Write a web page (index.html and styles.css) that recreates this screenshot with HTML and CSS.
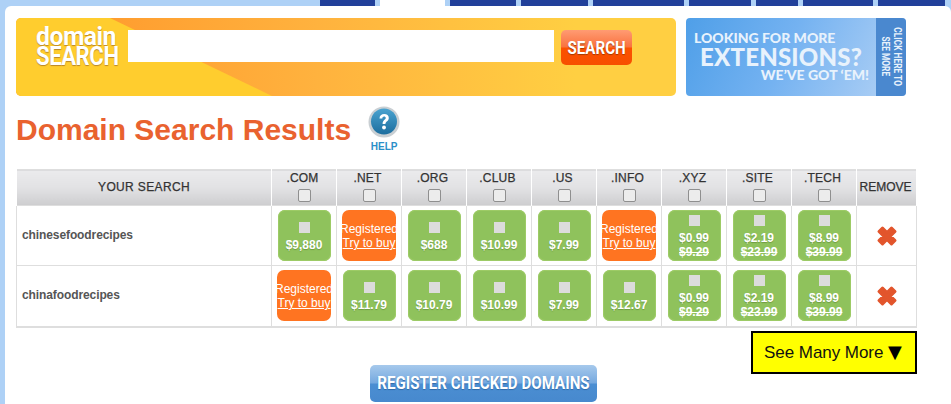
FILE: index.html
```html
<!DOCTYPE html>
<html lang="en">
<head>
<meta charset="utf-8">
<title>Domain Search Results</title>
<link rel="stylesheet" href="styles.css">
</head>
<body>
<nav class="nav">
  <span class="tab t1"></span><span class="tab t2 active"></span><span class="tab t3"></span><span class="tab t4"></span><span class="tab t5"></span><span class="tab t6"></span><span class="tab t7"></span><span class="tab t8"></span><span class="tab t9"></span>
</nav>
<main class="panel">
  <div class="top-row">
    <div class="banner">
      <div class="logo"><span class="logo-a">domain</span><span class="logo-b">SEARCH</span></div>
      <div class="search-input"></div>
      <div class="search-btn"><span class="cond">SEARCH</span></div>
    </div>
    <div class="promo">
      <div class="promo-copy">
        <div class="promo-l1">LOOKING FOR MORE</div>
        <div class="promo-l2">EXTENSIONS?</div>
        <div class="promo-l3">WE’VE GOT ‘EM!</div>
      </div>
      <div class="promo-tab"><span class="promo-tab-text">CLICK HERE TO<br>SEE MORE</span></div>
    </div>
  </div>
  <div class="title-row">
    <h1 class="title">Domain Search Results</h1>
    <div class="help">
      <svg class="help-icon" width="32" height="32" viewBox="0 0 32 32">
        <defs>
          <linearGradient id="hg" x1="0" y1="0" x2="0" y2="1"><stop offset="0" stop-color="#4aa3d0"/><stop offset="1" stop-color="#1c6d9e"/></linearGradient>
        </defs>
        <circle cx="16" cy="16" r="15.5" fill="#c9cfd3"/>
        <circle cx="16" cy="15.5" r="13" fill="url(#hg)"/>
        <path d="M11.5 12.5c0-3 2-4.6 4.7-4.6 2.8 0 4.6 1.6 4.6 4 0 3.2-3.400 3.400-3.400 6.200h-2.800c0-4.200 3.200-4.200 3.200-6 0-1-.7-1.600-1.700-1.600-1.100 0-1.800.7-1.800 2z" fill="#fff"/>
        <circle cx="16" cy="21.500" r="1.900" fill="#fff"/>
      </svg>
      <span class="help-label">HELP</span>
    </div>
  </div>
  <table class="results">
    <colgroup><col class="c-name"><col class="c-ext"><col class="c-ext"><col class="c-ext"><col class="c-ext"><col class="c-ext"><col class="c-ext"><col class="c-ext"><col class="c-ext"><col class="c-ext"><col class="c-rm"></colgroup>
    <thead>
      <tr>
        <th class="th-name">YOUR SEARCH</th>
        <th class="th-ext">.COM<input type="checkbox" class="hcheck"></th>
        <th class="th-ext">.NET<input type="checkbox" class="hcheck"></th>
        <th class="th-ext">.ORG<input type="checkbox" class="hcheck"></th>
        <th class="th-ext">.CLUB<input type="checkbox" class="hcheck"></th>
        <th class="th-ext">.US<input type="checkbox" class="hcheck"></th>
        <th class="th-ext">.INFO<input type="checkbox" class="hcheck"></th>
        <th class="th-ext">.XYZ<input type="checkbox" class="hcheck"></th>
        <th class="th-ext">.SITE<input type="checkbox" class="hcheck"></th>
        <th class="th-ext">.TECH<input type="checkbox" class="hcheck"></th>
        <th class="th-rm">REMOVE</th>
      </tr>
    </thead>
    <tbody>
      <tr class="row-a">
        <td class="name">chinesefoodrecipes</td>
        <td><div class="tile"><input type="checkbox" class="tcheck"><span>$9,880</span></div></td>
        <td><div class="tile taken"><span>Registered</span><a href="#">Try to buy</a></div></td>
        <td><div class="tile"><input type="checkbox" class="tcheck"><span>$688</span></div></td>
        <td><div class="tile"><input type="checkbox" class="tcheck"><span>$10.99</span></div></td>
        <td><div class="tile"><input type="checkbox" class="tcheck"><span>$7.99</span></div></td>
        <td><div class="tile taken"><span>Registered</span><a href="#">Try to buy</a></div></td>
        <td><div class="tile sale"><input type="checkbox" class="tcheck"><span>$0.99</span><s>$9.29</s></div></td>
        <td><div class="tile sale"><input type="checkbox" class="tcheck"><span>$2.19</span><s>$23.99</s></div></td>
        <td><div class="tile sale"><input type="checkbox" class="tcheck"><span>$8.99</span><s>$39.99</s></div></td>
        <td class="rm"><svg width="22" height="22" viewBox="0 0 22 22"><path d="M3 6.500 6.500 3 11 7.500 15.500 3 19 6.500 14.500 11 19 15.500 15.500 19 11 14.500 6.500 19 3 15.500 7.500 11z" fill="#e2552c" stroke="#e2552c" stroke-width="3" stroke-linejoin="round"/></svg></td>
      </tr>
      <tr class="row-b">
        <td class="name">chinafoodrecipes</td>
        <td><div class="tile taken"><span>Registered</span><a href="#">Try to buy</a></div></td>
        <td><div class="tile"><input type="checkbox" class="tcheck"><span>$11.79</span></div></td>
        <td><div class="tile"><input type="checkbox" class="tcheck"><span>$10.79</span></div></td>
        <td><div class="tile"><input type="checkbox" class="tcheck"><span>$10.99</span></div></td>
        <td><div class="tile"><input type="checkbox" class="tcheck"><span>$7.99</span></div></td>
        <td><div class="tile"><input type="checkbox" class="tcheck"><span>$12.67</span></div></td>
        <td><div class="tile sale"><input type="checkbox" class="tcheck"><span>$0.99</span><s>$9.29</s></div></td>
        <td><div class="tile sale"><input type="checkbox" class="tcheck"><span>$2.19</span><s>$23.99</s></div></td>
        <td><div class="tile sale"><input type="checkbox" class="tcheck"><span>$8.99</span><s>$39.99</s></div></td>
        <td class="rm"><svg width="22" height="22" viewBox="0 0 22 22"><path d="M3 6.500 6.500 3 11 7.500 15.500 3 19 6.500 14.500 11 19 15.500 15.500 19 11 14.500 6.500 19 3 15.500 7.500 11z" fill="#e2552c" stroke="#e2552c" stroke-width="3" stroke-linejoin="round"/></svg></td>
      </tr>
    </tbody>
  </table>
  <div class="more-row"><div class="more">See Many More <span class="more-arrow">▼</span></div></div>
  <div class="register-row"><div class="register"><span class="cond">REGISTER CHECKED DOMAINS</span></div></div>
</main>
</body>
</html>
```
FILE: styles.css
```css
* { box-sizing: border-box; }
html, body { margin: 0; height: 404px; overflow: hidden; }
body { background: #aed1f6; font-family: "Liberation Sans", Arial, sans-serif; color: #333; }

.nav { display: flex; gap: 5px; height: 6px; padding-left: 320px; }
.tab { display: block; height: 6px; background: #21409a; }
.tab.active { background: #fff; }
.t1 { width: 55px; } .t2 { width: 65px; } .t3 { width: 66px; } .t4 { width: 67px; } .t5 { width: 91px; }
.t6 { width: 62px; } .t7 { width: 42px; } .t8 { width: 70px; } .t9 { width: 67px; }

.panel { margin-left: 5px; height: 398px; background: #fff; border-radius: 6px 6px 0 0; padding: 12px 0 0 11px; overflow: hidden; }

.top-row { display: flex; gap: 10px; height: 78px; }
.banner { position: relative; width: 660px; height: 78px; border-radius: 5px; overflow: hidden; display: flex; align-items: flex-start; padding: 12px 0 0 20px;
  background: linear-gradient(90deg, #ff9d2f 90px, #ffb23e 300px, #ffcf42 560px); }
.banner::before { content: ""; position: absolute; inset: 0; background: #ffcd2e; clip-path: polygon(0 0, 94px 0, 256px 100%, 0 100%); }
.logo { position: relative; width: 92px; flex: none; display: flex; flex-direction: column; align-items: flex-start; color: #fff; font-family: "Roboto", sans-serif; font-weight: 700; text-shadow: 0 1px 1px #b9862a; margin-top: -4px; white-space: nowrap; }
.logo-a { display: block; font-size: 26px; line-height: 21px; letter-spacing: -0.5px; transform: scaleX(.95); transform-origin: left center; }
.logo-b { display: block; font-size: 26px; line-height: 19px; letter-spacing: -0.5px; transform: scaleX(.85); transform-origin: left center; }
.search-input { position: relative; flex: none; width: 426px; height: 32px; background: #fff; }
.search-btn { position: relative; flex: none; display: flex; justify-content: center; width: 71px; height: 35px; margin-left: 7px; border-radius: 5px; color: #fff; line-height: 35px; font-family: "Roboto", sans-serif; font-weight: 700; font-size: 18px; text-shadow: 0 1px 1px #a33a00; white-space: nowrap;
  background: linear-gradient(180deg, #ff9b73 0, #f9733f 48%, #fb5100 52%, #f74f00 100%); }
.cond { display: block; flex: none; transform: scaleX(.84); }

.promo { width: 220px; height: 78px; border-radius: 4px; overflow: hidden; display: flex; background: linear-gradient(115deg, #4f9fe8 0, #74b2f1 45%, #b5d3f5 100%); }
.promo-copy { width: 190px; padding: 13px 7px 0 8px; color: #e8f2fc; font-family: "Lato", sans-serif; font-weight: 900; }
.promo-l1 { font-size: 14px; line-height: 14px; white-space: nowrap; }
.promo-l2 { font-size: 24px; line-height: 23px; padding-left: 6px; white-space: nowrap; letter-spacing: .2px; }
.promo-l3 { font-size: 14px; line-height: 13px; text-align: right; white-space: nowrap; }
.promo-tab { width: 30px; background: #4a88cf; color: #e8f2fc; display: flex; align-items: center; justify-content: center; font-family: "Roboto", sans-serif; font-weight: 700; font-size: 11px; line-height: 12px; }
.promo-tab-text { display: block; flex: none; writing-mode: vertical-rl; text-align: center; white-space: nowrap; transform: scaleY(.76); }

.title-row { display: flex; height: 73px; }
.title { margin: 17px 0 0; font-size: 30px; line-height: 34px; font-weight: 700; color: #e9622f; white-space: nowrap; }
.help { display: flex; flex-direction: column; align-items: center; margin: 10px 0 0 17px; width: 32px; }
.help-icon { display: block; flex: none; }
.help-label { font-size: 10px; line-height: 12px; font-weight: 700; color: #2b8fc8; margin-top: 3px; }

.results { width: 900px; table-layout: fixed; border-collapse: collapse; border: 1px solid #dedede; border-bottom-width: 2px; }
.c-name { width: 255px; } .c-ext { width: 65px; } .c-rm { width: 60px; }
.results th { height: 36px; padding: 0; font-size: 12px; font-weight: 400; line-height: 14px; color: #333; text-align: center; vertical-align: middle; border-left: 1px solid #fff; border-right: 1px solid #fff; -webkit-text-stroke: .25px #333; background: linear-gradient(180deg, #ebebed 0, #e2e2e4 50%, #cdcdcf 100%); }
.results .th-name { letter-spacing: .35px; padding-bottom: 2px; }
.results .th-ext { text-indent: -3px; letter-spacing: .2px; padding-bottom: 2px; }
.results .th-rm { padding-bottom: 2px; text-indent: -2px; }
.results td { padding: 0; border: 1px solid #dedede; vertical-align: middle; }
.row-a td { height: 60px; }
.row-b td { height: 61px; }
.results .name { padding: 0 0 2px 5px; font-size: 12px; font-weight: 700; color: #555; letter-spacing: -.1px; }
.rm { text-align: center; }
.rm svg { display: block; margin: 0 auto; }

.hcheck { appearance: none; display: block; width: 13px; height: 13px; margin: 4px auto 0; border: 1px solid #8f8f8f; border-radius: 2px; background: #ececec; }
.tile { width: 53px; height: 51px; margin: 0 auto; padding-top: 12px; border-radius: 7px; background: #8fc25c; color: #fff; display: flex; flex-direction: column; align-items: center; font-size: 12px; font-weight: 700; line-height: 14px; box-shadow: inset 0 0 0 1px #9dcb66; text-shadow: 0 1px 1px #6f9c42; overflow: hidden; white-space: nowrap; }
.tile s { text-shadow: none; }
.tile.sale { padding-top: 5px; }
.tile.sale .tcheck { margin-bottom: 5px; }
.tile.taken { width: 54px; background: #ff7421; font-weight: 400; box-shadow: none; text-shadow: none; }
.tile a { color: #fff; text-decoration: underline; }
.tcheck { appearance: none; display: block; width: 11px; height: 11px; margin: 0 0 5px; background: #dcdcdc; border: 0; flex: none; }

.more-row { display: flex; justify-content: flex-start; height: 0; padding-left: 735px; }
.more { flex: none; width: 166px; height: 43px; margin-top: 3px; padding-left: 11px; border: 2px solid #000; background: #ff0; color: #111; font-size: 17px; line-height: 39px; white-space: nowrap; letter-spacing: -.05px; }
.more-arrow { font-family: "DejaVu Sans", sans-serif; font-size: 18px; line-height: 18px; color: #000; }
.register-row { padding: 37px 0 0 354px; }
.register { display: flex; justify-content: center; width: 227px; height: 37px; border-radius: 5px; color: #fff; line-height: 36px; font-family: "Roboto", sans-serif; font-weight: 700; font-size: 18px; white-space: nowrap; text-shadow: 0 1px 1px #2f6aa8; background: linear-gradient(180deg, #a6c9ec 0, #76a9df 48%, #4b8ed2 52%, #4789ce 100%); }
```
